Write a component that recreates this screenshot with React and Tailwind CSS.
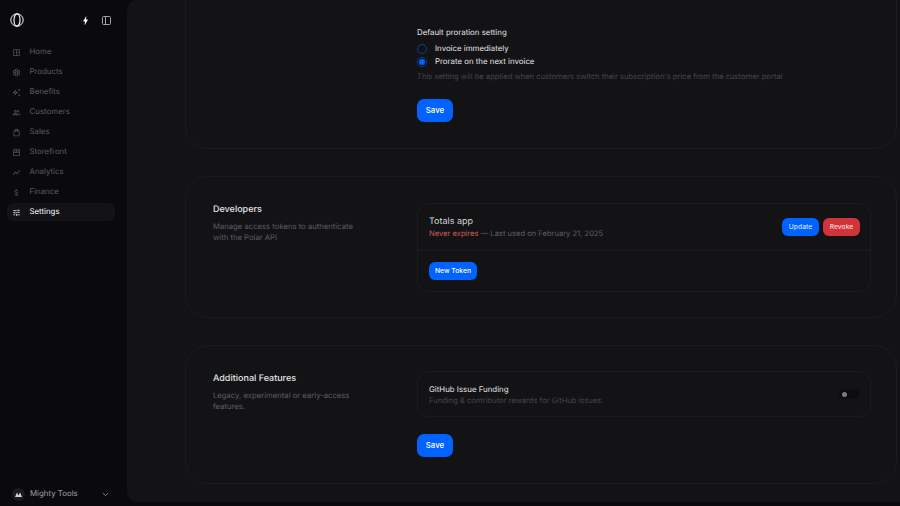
import { ChevronDown } from "lucide-react";
import {
  MdBolt,
  MdOutlineAttachMoney,
  MdOutlineAutoAwesome,
  MdOutlineHive,
  MdOutlinePeople,
  MdOutlineShoppingBag,
  MdOutlineShowChart,
  MdOutlineSpaceDashboard,
  MdOutlineStorefront,
  MdOutlineTune,
} from "react-icons/md";

const NAV_ITEMS = [
  { label: "Home", icon: MdOutlineSpaceDashboard },
  { label: "Products", icon: MdOutlineHive },
  { label: "Benefits", icon: MdOutlineAutoAwesome },
  { label: "Customers", icon: MdOutlinePeople },
  { label: "Sales", icon: MdOutlineShoppingBag },
  { label: "Storefront", icon: MdOutlineStorefront },
  { label: "Analytics", icon: MdOutlineShowChart },
  { label: "Finance", icon: MdOutlineAttachMoney },
  { label: "Settings", icon: MdOutlineTune, active: true },
];

function Logo() {
  return (
    <svg width="14" height="14" viewBox="0 0 14 14" fill="none" stroke="#f4f4f5">
      <circle cx="7" cy="7" r="6.2" strokeWidth="1" />
      <ellipse cx="7" cy="7" rx="3" ry="6.2" strokeWidth="1.2" />
    </svg>
  );
}

function PanelIcon() {
  return (
    <svg width="9" height="9" viewBox="0 0 9 9" fill="none" stroke="#a1a1aa" strokeWidth="1">
      <rect x="0.5" y="0.5" width="8" height="8" rx="1" />
      <line x1="3.5" y1="0.5" x2="3.5" y2="8.5" />
    </svg>
  );
}

function OrgIcon() {
  return (
    <svg width="7" height="5" viewBox="0 0 7 5" fill="#d4d4d8">
      <path d="M0 5 L2 0.5 L3.4 3.4 L5 0.5 L7 5 Z" />
    </svg>
  );
}

function Sidebar() {
  return (
    <aside className="flex h-full w-[127px] shrink-0 flex-col justify-between">
      <div>
        <div className="flex h-[40px] items-center justify-between pl-[10px] pr-[16px]">
          <Logo />
          <div className="flex items-center gap-[11px]">
            <MdBolt className="h-[11px] w-[11px] text-white" />
            <PanelIcon />
          </div>
        </div>
        <nav className="mt-[3px] flex flex-col gap-[2px] pl-[7px] pr-[12px]">
          {NAV_ITEMS.map(({ label, icon: Icon, active }) => (
            <div
              key={label}
              className={`flex h-[18px] items-center gap-[9px] rounded-[6px] px-[4.5px] text-[7.875px] ${
                active ? "bg-[#131316] text-white" : "text-[#5c5c66]"
              }`}
            >
              <Icon className={`h-[9px] w-[9px] shrink-0 ${active ? "text-[#d4d4d8]" : "text-[#50505a]"}`} />
              <span>{label}</span>
            </div>
          ))}
        </nav>
      </div>
      <div className="mb-[3px] flex h-[18px] items-center justify-between pl-[12px] pr-[17px]">
        <div className="flex items-center gap-[5px]">
          <div className="flex h-[13px] w-[13px] items-center justify-center rounded-full bg-[#1c1c20]">
            <OrgIcon />
          </div>
          <span className="text-[7.875px] text-[#a1a1aa]">Mighty Tools</span>
        </div>
        <ChevronDown className="h-[9px] w-[9px] text-[#a1a1aa]" />
      </div>
    </aside>
  );
}

function SaveButton({ children = "Save" }) {
  return (
    <button
      type="button"
      className="flex h-[23px] w-[36px] items-center justify-center rounded-[7px] bg-[#0062ff] text-[7.875px] font-medium text-white"
    >
      {children}
    </button>
  );
}

function SmallButton({ className, children }) {
  return (
    <button
      type="button"
      className={`flex h-[18px] items-center justify-center rounded-[6px] text-[6.75px] font-medium ${className}`}
    >
      {children}
    </button>
  );
}

function Radio({ checked, label }) {
  return (
    <div className="flex h-[13px] items-center gap-[8px]">
      <span className="flex h-[10px] w-[10px] items-center justify-center rounded-full border border-[#0a3a99]">
        {checked && <span className="h-[6px] w-[6px] rounded-full bg-[#0062ff]" />}
      </span>
      <span className="text-[7.875px] text-[#e4e4e7]">{label}</span>
    </div>
  );
}

function Section({ className, innerClassName, title, desc, children }) {
  return (
    <section
      className={`flex gap-[49px] rounded-[23px] border border-[#1c1c20] pl-[27px] pr-[25px] ${className}`}
    >
      <div className="w-[155px] shrink-0 pt-[27px]">
        <h2 className="text-[9px] font-medium leading-[12px] text-[#e4e4e7]">{title}</h2>
        <p className="mt-[5px] text-[7.7px] leading-[11px] text-[#5c5c66]">{desc}</p>
      </div>
      <div className={`min-w-0 flex-1 ${innerClassName}`}>{children}</div>
    </section>
  );
}

export default function App() {
  return (
    <div className="flex h-[506px] w-[900px] overflow-hidden bg-[#0a0a0c] font-['Inter',sans-serif] [text-rendering:geometricPrecision]">
      <Sidebar />
      <main className="mb-[4px] flex h-[502px] min-w-0 flex-1 flex-col justify-end gap-[27px] overflow-hidden rounded-tl-[10px] rounded-bl-[10px] bg-[#131316] pb-[18px] pl-[58px] pr-[3px]">
        <section className="flex h-[200px] shrink-0 flex-col justify-end rounded-[23px] border border-[#1c1c20] pb-[26px] pl-[231px]">
          <p className="mb-[4px] text-[7.875px] leading-[11px] text-[#e4e4e7]">Default proration setting</p>
          <div className="flex flex-col">
            <Radio label="Invoice immediately" />
            <Radio checked label="Prorate on the next invoice" />
          </div>
          <p className="mt-[3px] text-[7.62px] leading-[11px] text-[#44444c]">
            This setting will be applied when customers switch their subscription's price from the customer portal
          </p>
          <div className="mt-[17px]">
            <SaveButton />
          </div>
        </section>

        <Section
          className="h-[142px] shrink-0"
          innerClassName="pt-[26px]"
          title="Developers"
          desc="Manage access tokens to authenticate with the Polar API"
        >
          <div className="rounded-[12px] border border-[#1c1c20]">
            <div className="flex h-[47px] items-center justify-between border-b border-[#1c1c20] pl-[11px] pr-[10px]">
              <div className="pt-[1px]">
                <p className="text-[9px] leading-[12px] text-[#d4d4d8]">Totals app</p>
                <p className="text-[7.58px] leading-[11px] text-[#5c5c66]">
                  <span className="text-[#c9595a]">Never expires</span> — Last used on February 21, 2025
                </p>
              </div>
              <div className="flex gap-[4px]">
                <SmallButton className="w-[37px] bg-[#0062ff] text-[#cfe0ff]">Update</SmallButton>
                <SmallButton className="w-[37px] bg-[#d13438] text-[#f8d7d7]">Revoke</SmallButton>
              </div>
            </div>
            <div className="flex h-[40px] items-center pl-[11px]">
              <SmallButton className="w-[48px] bg-[#0062ff] text-white">New Token</SmallButton>
            </div>
          </div>
        </Section>

        <Section
          className="h-[139px] shrink-0"
          innerClassName="pt-[25px]"
          title="Additional Features"
          desc="Legacy, experimental or early-access features."
        >
          <div className="flex h-[46px] items-center justify-between rounded-[12px] border border-[#1c1c20] pl-[11px] pr-[11px]">
            <div className="pt-[1px]">
              <p className="text-[7.875px] leading-[11px] text-[#e4e4e7]">GitHub Issue Funding</p>
              <p className="text-[7.58px] leading-[11px] text-[#44444c]">
                Funding &amp; contributor rewards for GitHub issues.
              </p>
            </div>
            <span className="flex h-[10px] w-[20px] items-center rounded-full bg-[#0d0d10] pl-[3px]">
              <span className="h-[5px] w-[5px] rounded-full bg-[#7a7a85]" />
            </span>
          </div>
          <div className="mt-[17px]">
            <SaveButton />
          </div>
        </Section>
      </main>
    </div>
  );
}
